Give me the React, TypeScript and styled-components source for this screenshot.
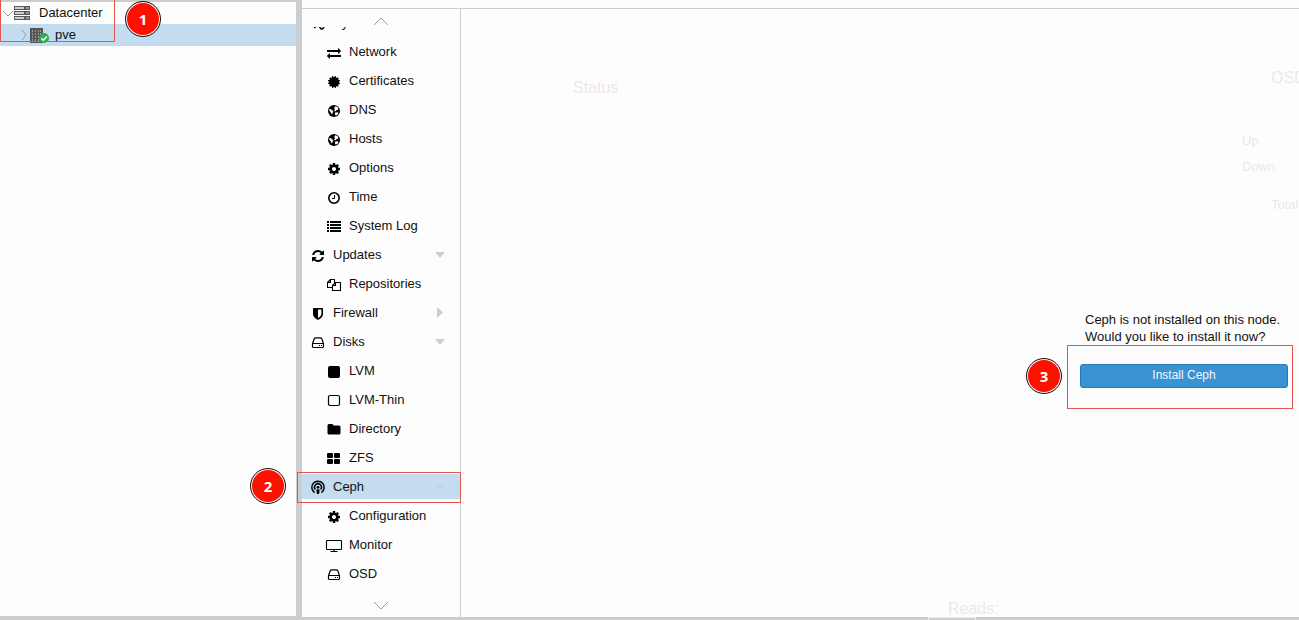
import React from "react";
import styled, { createGlobalStyle } from "styled-components";

const GlobalStyle = createGlobalStyle`
  * { box-sizing: border-box; }
  body {
    margin: 0;
    background: #fdfdfd;
    color: #111;
    font: 13px/17px "Liberation Sans", Helvetica, Arial, sans-serif;
  }
`;

const line = "#cdcdcd";
const selected = "#c3dcf0";
const faint = "#efe7e8";

const Layout = styled.div`
  display: grid;
  grid-template-columns: 296px 6px 159px minmax(0, 1fr);
  height: 100vh;
  min-height: 620px;
  overflow: hidden;
`;

const TreePanel = styled.aside`
  position: relative;
  border-top: 2px solid ${line};
  border-bottom: 4px solid ${line};
`;

const TreeList = styled.ul`
  margin: 0;
  padding: 0;
  list-style: none;
`;

const TreeRow = styled.li<{ $depth: number; $selected?: boolean }>`
  display: flex;
  align-items: center;
  height: 22px;
  padding-left: ${(p) => 2 + p.$depth * 16}px;
  background: ${(p) => (p.$selected ? selected : "transparent")};

  svg { flex: none; }
`;

const TreeLink = styled.a<{ $gap: number }>`
  margin-left: ${(p) => p.$gap}px;
  padding-bottom: 2px;
  color: inherit;
  text-decoration: none;
`;

const Splitter = styled.div`
  background: ${line};
`;

const NavPanel = styled.nav`
  position: relative;
  display: flex;
  flex-direction: column;
  min-height: 0;
  padding-top: 8px;
  border-bottom: 3px solid ${line};
`;

const NavBody = styled.div`
  display: flex;
  flex: 1;
  flex-direction: column;
  min-height: 0;
  border-top: 1px solid ${line};
  border-right: 1px solid ${line};
`;

const ScrollButton = styled.button<{ $height: number }>`
  display: flex;
  flex: none;
  align-items: center;
  justify-content: center;
  height: ${(p) => p.$height}px;
  padding: 5px 0 0;
  border: 0;
  background: none;
`;

const NavViewport = styled.div`
  flex: 1;
  min-height: 0;
  overflow: hidden;
`;

const NavList = styled.ul`
  margin: -19px 0 0;
  padding: 0;
  list-style: none;
`;

const NavItem = styled.li`
  display: flex;
  align-items: center;
  height: 29px;
`;

const NavLink = styled.a<{ $child?: boolean; $selected?: boolean }>`
  display: flex;
  flex: 1;
  align-items: center;
  gap: 8px;
  height: 25px;
  padding: 0 14px 0 ${(p) => (p.$child ? 25 : 9)}px;
  background: ${(p) => (p.$selected ? selected : "transparent")};
  color: inherit;
  text-decoration: none;
`;

const NavIcon = styled.svg`
  flex: none;
  width: 14px;
  height: 14px;
  margin-top: 3px;
  color: #000;
  overflow: visible;
`;

const NavLabel = styled.span`
  flex: 1;
`;

const Expander = styled.svg<{ $muted?: boolean }>`
  width: 12px;
  height: 12px;
  fill: ${(p) => (p.$muted ? "#d3cfcd" : "#cdcdcd")};
`;

const Main = styled.main`
  position: relative;
  display: flex;
  flex-direction: column;
  min-width: 0;
  padding-top: 8px;
`;

const Dashboard = styled.div`
  display: flex;
  flex: 1;
  flex-direction: column;
  justify-content: space-between;
  border-top: 1px solid ${line};
  color: ${faint};
`;

const DashboardTop = styled.div`
  display: flex;
  justify-content: space-between;
  padding: 59px 0 0 112px;
`;

const PanelTitle = styled.h2<{ $top?: number; $left?: number }>`
  margin: ${(p) => p.$top ?? 0}px 0 0 ${(p) => p.$left ?? 0}px;
  font-size: 16px;
  font-weight: 400;
  line-height: 16px;
  white-space: nowrap;
`;

const OsdPanel = styled.section`
  width: 57px;
  overflow: hidden;
  white-space: nowrap;
`;

const OsdStates = styled.div`
  display: flex;
  flex-direction: column;
  gap: 9px;
  margin: 46px 0 21px;
`;

const OsdTotal = styled.div`
  padding-left: 29px;
`;

const BottomBar = styled.div`
  flex: none;
  height: 3px;
  padding-left: 467px;
  overflow: hidden;
  background: ${line};
`;

const BottomTab = styled.div`
  width: 48px;
  height: 8px;
  border: 1px solid #f4eeee;
`;

const Prompt = styled.section`
  position: absolute;
  top: 311px;
  right: 11px;
  display: flex;
  flex-direction: column;
  gap: 19px;
  width: 208px;
`;

const PromptText = styled.p`
  margin: 0;
  padding-left: 5px;
  white-space: nowrap;
`;

const InstallButton = styled.button`
  height: 24px;
  padding: 0 0 2px;
  border: 1px solid #2778b6;
  border-radius: 3px;
  background: #3892d3;
  color: #f2f7fb;
  font: 12px/16px "Liberation Sans", Helvetica, Arial, sans-serif;
`;

const Frame = styled.div<{ $top: number; $left?: number; $right?: number; $width: number; $height: number }>`
  position: absolute;
  z-index: 1;
  top: ${(p) => p.$top}px;
  ${(p) => (p.$right === undefined ? `left: ${p.$left}px;` : `right: ${p.$right}px;`)}
  width: ${(p) => p.$width}px;
  height: ${(p) => p.$height}px;
  border: 1px solid #e5554f;
  pointer-events: none;
`;

const Badge = styled.span<{ $top: number; $left: number }>`
  position: absolute;
  top: ${(p) => p.$top}px;
  left: ${(p) => p.$left}px;
  display: grid;
  place-items: center;
  width: 34px;
  height: 34px;
  border-radius: 50%;
  outline: 1px solid #111;
  background: #fe1100;
  box-shadow: inset 0 0 0 1px #fff;
  color: #fff;
  font: 700 15px/20px "Open Sans", sans-serif;
`;

const COG =
  "M1152 896q0-106-75-181t-181-75-181 75-75 181 75 181 181 75 181-75 75-181zm512-109v222q0 12-8 23t-20 13l-185 28q-19 54-39 91 35 50 107 138 10 12 10 25t-9 23q-27 37-99 108t-94 71q-12 0-26-9l-138-108q-44 23-91 38-16 136-29 186-7 28-36 28h-222q-14 0-24.5-8.5t-11.5-21.5l-28-184q-49-16-90-37l-141 107q-10 9-25 9-14 0-25-11-126-114-165-168-7-10-7-23 0-12 8-23 15-21 51-66.5t54-70.5q-27-50-41-99l-183-27q-13-2-21-12.5t-8-23.5v-222q0-12 8-23t19-13l186-28q14-46 39-92-40-57-107-138-10-12-10-24 0-10 9-23 26-36 98.5-107.5t94.5-71.5q13 0 26 10l138 107q44-23 91-38 16-136 29-186 7-28 36-28h222q14 0 24.5 8.5t11.5 21.5l28 184q49 16 90 37l142-107q9-9 24-9 13 0 25 10 129 119 165 170 7 8 7 22 0 12-8 23-15 21-51 66.5t-54 70.5q26 50 41 98l183 28q13 2 21 12.5t8 23.5z";
const EXCHANGE =
  "M1792 1184v192q0 13-9.5 22.5t-22.5 9.5h-1376v192q0 13-9.5 22.5t-22.5 9.5q-12 0-24-10l-319-320q-9-9-9-22 0-14 9-23l320-320q9-9 23-9 13 0 22.5 9.5t9.5 22.5v192h1376q13 0 22.5 9.5t9.5 22.5zm0-544q0 14-9 23l-320 320q-9 9-23 9-13 0-22.5-9.5t-9.5-22.5v-192h-1376q-13 0-22.5-9.5t-9.5-22.5v-192q0-13 9.5-22.5t22.5-9.5h1376v-192q0-14 9-23t23-9q12 0 24 10l319 319q9 9 9 23z";
const REFRESH =
  "M1639 1056q0 5-1 7-64 268-268 434.5t-478 166.5q-146 0-282.5-55t-243.5-157l-129 129q-19 19-45 19t-45-19-19-45v-448q0-26 19-45t45-19h448q26 0 45 19t19 45-19 45l-137 137q71 66 161 102t187 36q134 0 250-65t186-179q11-17 53-117 8-23 30-23h192q13 0 22.5 9.5t9.5 22.5zm25-800v448q0 26-19 45t-45 19h-448q-26 0-45-19t-19-45 19-45l138-138q-148-137-349-137-134 0-250 65t-186 179q-11 17-53 117-8 23-30 23h-199q-13 0-22.5-9.5t-9.5-22.5v-7q65-268 270-434.5t480-166.5q146 0 284 55.5t245 156.5l130-129q19-19 45-19t45 19 19 45z";
const CERTIFICATE =
  "M1504 896l138 135q30 28 20 70-12 41-52 51l-188 48 53 186q12 41-19 70-29 31-70 19l-186-53-48 188q-10 40-51 52-12 2-19 2-31 0-51-22l-135-138-135 138q-28 30-70 20-41-11-51-52l-48-188-186 53q-41 12-70-19-31-29-19-70l53-186-188-48q-40-10-52-51-10-42 20-70l138-135-138-135q-30-28-20-70 12-41 52-51l188-48-53-186q-12-41 19-70 29-31 70-19l186 53 48-188q10-41 51-51 41-12 70 19l135 139 135-139q29-30 70-19 41 10 51 51l48 188 186-53q41-12 70 19 31 29 19 70l-53 186 188 48q40 10 52 51 10 42-20 70z";

type IconName =
  | "cogs" | "exchange" | "certificate" | "globe" | "cog" | "clock" | "list" | "refresh" | "copy"
  | "shield" | "drive" | "square" | "squareOutline" | "folder" | "tiles" | "podcast" | "monitor";

const glyph = (d: string) => <path d={d} transform="scale(.0078125)" />;

const drawings: Record<IconName, React.ReactNode> = {
  cogs: (
    <>
      <path d={COG} transform="translate(-1 2) scale(.0055)" />
      <path d={COG} transform="translate(7.500 0) scale(.0036)" />
      <path d={COG} transform="translate(7.500 7) scale(.0036)" />
    </>
  ),
  exchange: glyph(EXCHANGE),
  certificate: glyph(CERTIFICATE),
  cog: glyph(COG),
  refresh: glyph(REFRESH),
  globe: (
    <>
      <circle cx="7" cy="7" r="6" />
      <path
        fill="#fdfdfd"
        d="M8 2.200l2 .5 1.500 1.500-.6.8.3.7-1.600.3-1 1.200-1.100.1-.3-1.200 1-.8-1-.8zM2.300 5.200l1.400-.2 1.700 1.500 1 .8-.7 1.200-.4 1.800-1.200-.9-.5-1.500-1.300-1.100zM8.200 8.600l1.600-.4 1.600.6-.3 1.200-1.300 1.300-1.300.3-.6-1.600z"
      />
    </>
  ),
  clock: (
    <>
      <circle cx="7" cy="7" r="5.200" fill="none" stroke="currentColor" strokeWidth="1.600" />
      <path d="M7.500 4v3.500H5" fill="none" stroke="currentColor" />
    </>
  ),
  list: (
    <path d="M0 1h2v2H0zM3 1h11v2H3zM0 4h2v2H0zM3 4h11v2H3zM0 7h2v2H0zM3 7h11v2H3zM0 10h2v2H0zM3 10h11v2H3z" />
  ),
  copy: (
    <path
      d="M5.500 9.500h-5v-5l3-3h4v3M3.500 1.500v3h-3M5.500 12.500v-5l3-3h5v8zM8.500 4.500v3h-3"
      fill="none"
      stroke="currentColor"
      strokeWidth="1.100"
      strokeLinejoin="round"
    />
  ),
  shield: (
    <path
      fillRule="evenodd"
      d="M2.400 1h9.200q.4 0 .4.400V7q0 3.400-5 6-5-2.600-5-6V1.400q0-.4.400-.4zM7 2.600v8.600q3.400-1.900 3.400-4.200V2.600z"
    />
  ),
  drive: (
    <>
      <path
        d="M1.500 7.500h11M1.500 7.500v3q0 1 1 1h9q1 0 1-1v-3L10.800 2.700q-.3-.8-1.300-.8h-5q-1 0-1.300.8z"
        fill="none"
        stroke="currentColor"
        strokeWidth="1.200"
        strokeLinejoin="round"
      />
      <path d="M8 9h1v1H8zM10 9h1v1h-1z" />
    </>
  ),
  square: <rect x="1" y="1" width="12" height="12" rx="2" />,
  squareOutline: <rect x="1.500" y="1.500" width="11" height="10" rx="1.800" fill="none" stroke="currentColor" strokeWidth="1.200" />,
  folder: <path d="M.5 2.500Q.5 1 2 1h3q1.500 0 1.500 1.500H12q1.500 0 1.500 1.500v6q0 1.500-1.500 1.500H2Q.5 11.500.5 10z" />,
  tiles: (
    <>
      <rect x="0" y="1" width="6" height="5" rx="1" />
      <rect x="7" y="1" width="6" height="5" rx="1" />
      <rect x="0" y="7" width="6" height="5" rx="1" />
      <rect x="7" y="7" width="6" height="5" rx="1" />
    </>
  ),
  podcast: (
    <>
      <path
        d="M3.600 11.600A6.200 6.200 0 1 1 10.400 11.600M4.300 8.500A3.500 3.500 0 1 1 9.700 8.500"
        fill="none"
        stroke="currentColor"
        strokeWidth="1.500"
      />
      <circle cx="7" cy="6.300" r="1.400" />
      <path d="M5.300 8.600q1.700-.9 3.400 0l-.6 4.100q-1.100.8-2.200 0z" />
    </>
  ),
  monitor: (
    <path
      d="M.3 1.500h13.400q.8 0 .8.800v7.400q0 .8-.8.800H.3q-.8 0-.8-.8V2.300q0-.8.800-.8zM7 10.500v2M3.500 12.500h7"
      fill="none"
      stroke="currentColor"
      strokeWidth="1.100"
    />
  ),
};

interface Entry {
  label: string;
  icon: IconName;
  child?: boolean;
  expander?: "open" | "closed";
  selected?: boolean;
}

const entries: Entry[] = [
  { label: "System", icon: "cogs" },
  { label: "Network", icon: "exchange", child: true },
  { label: "Certificates", icon: "certificate", child: true },
  { label: "DNS", icon: "globe", child: true },
  { label: "Hosts", icon: "globe", child: true },
  { label: "Options", icon: "cog", child: true },
  { label: "Time", icon: "clock", child: true },
  { label: "System Log", icon: "list", child: true },
  { label: "Updates", icon: "refresh", expander: "open" },
  { label: "Repositories", icon: "copy", child: true },
  { label: "Firewall", icon: "shield", expander: "closed" },
  { label: "Disks", icon: "drive", expander: "open" },
  { label: "LVM", icon: "square", child: true },
  { label: "LVM-Thin", icon: "squareOutline", child: true },
  { label: "Directory", icon: "folder", child: true },
  { label: "ZFS", icon: "tiles", child: true },
  { label: "Ceph", icon: "podcast", expander: "open", selected: true },
  { label: "Configuration", icon: "cog", child: true },
  { label: "Monitor", icon: "monitor", child: true },
  { label: "OSD", icon: "drive", child: true },
];

function NavEntry({ label, icon, child, expander, selected: active }: Entry) {
  return (
    <NavItem>
      <NavLink href="#" $child={child} $selected={active} aria-current={active ? "page" : undefined}>
        <NavIcon viewBox="0 0 14 14" fill="currentColor" aria-hidden="true">
          {drawings[icon]}
        </NavIcon>
        <NavLabel>{label}</NavLabel>
        {expander && (
          <Expander viewBox="0 0 12 12" $muted={active} aria-hidden="true">
            {active ? <path d="M3 4h6v2L6 8 3 6z" /> : <path d={expander === "open" ? "M1 3h10L6 9z" : "M3 0v11l6-5.500z"} />}
          </Expander>
        )}
      </NavLink>
    </NavItem>
  );
}

function Chevron({ d, width, height }: { d: string; width: number; height: number }) {
  return (
    <svg width={width} height={height} viewBox={`0 0 ${width} ${height}`} fill="none" stroke="#9b9b9b" aria-hidden="true">
      <path d={d} />
    </svg>
  );
}

function DatacenterIcon() {
  return (
    <svg width="16" height="16" viewBox="0 0 16 16" aria-hidden="true">
      {[1, 6, 11].map((y) => (
        <g key={y}>
          <rect x="0" y={y} width="16" height="4" fill="#5a5a5a" />
          <rect x="1" y={y + 1} width="9" height="2" fill="#d0d0d0" />
          <rect x="12" y={y + 1} width="3" height="2" fill="#9a9a9a" />
        </g>
      ))}
    </svg>
  );
}

function NodeIcon() {
  return (
    <svg width="20" height="16" viewBox="0 0 20 16" aria-hidden="true">
      <path d="M0 1h13v15H0z" fill="#555" />
      {[3, 6, 9, 12].map((y) =>
        [2, 5, 8, 10].map((x) => <rect key={`${x}-${y}`} x={x} y={y} width="1" height="2" fill="#999" />)
      )}
      <circle cx="14" cy="11" r="5" fill="#27ae4e" />
      <path d="M11.300 11.200l2 2 3.500-3.800" fill="none" stroke="#fff" strokeWidth="1.500" />
    </svg>
  );
}

export default function App() {
  return (
    <>
      <GlobalStyle />
      <Layout>
        <TreePanel>
          <TreeList>
            <TreeRow $depth={0}>
              <Chevron d="M1 4l5 5 5-5" width={12} height={12} />
              <DatacenterIcon />
              <TreeLink href="#" $gap={9}>Datacenter</TreeLink>
            </TreeRow>
            <TreeRow $depth={1} $selected>
              <Chevron d="M4 1l4 5-4 5" width={12} height={12} />
              <NodeIcon />
              <TreeLink href="#" $gap={5}>pve</TreeLink>
            </TreeRow>
          </TreeList>
          <Frame $top={-3} $left={0} $width={115} $height={43} />
          <Badge $top={0} $left={126}>1</Badge>
          <Badge $top={467} $left={251}>2</Badge>
        </TreePanel>
        <Splitter />
        <NavPanel>
          <NavBody>
            <ScrollButton $height={18} aria-label="Scroll up">
              <Chevron d="M1 9l7-7 7 7" width={16} height={10} />
            </ScrollButton>
            <NavViewport>
              <NavList>
                {entries.map((entry) => (
                  <NavEntry key={entry.label} {...entry} />
                ))}
              </NavList>
            </NavViewport>
            <ScrollButton $height={28} aria-label="Scroll down">
              <Chevron d="M1 1l7 7 7-7" width={16} height={10} />
            </ScrollButton>
          </NavBody>
          <Frame $top={472} $left={-5} $width={164} $height={31} />
        </NavPanel>
        <Main>
          <Dashboard>
            <DashboardTop>
              <PanelTitle $top={12}>Status</PanelTitle>
              <OsdPanel>
                <PanelTitle $left={29} $top={2}>OSD</PanelTitle>
                <OsdStates>
                  <span>Up</span>
                  <span>Down</span>
                </OsdStates>
                <OsdTotal>Total</OsdTotal>
              </OsdPanel>
            </DashboardTop>
            <PanelTitle $left={487}>Reads:</PanelTitle>
          </Dashboard>
          <BottomBar>
            <BottomTab />
          </BottomBar>
          <Prompt>
            <PromptText>
              Ceph is not installed on this node.
              <br />
              Would you like to install it now?
            </PromptText>
            <InstallButton type="button">Install Ceph</InstallButton>
            <Badge $top={48} $left={-53}>3</Badge>
          </Prompt>
          <Frame $top={345} $right={6} $width={226} $height={64} />
        </Main>
      </Layout>
    </>
  );
}
